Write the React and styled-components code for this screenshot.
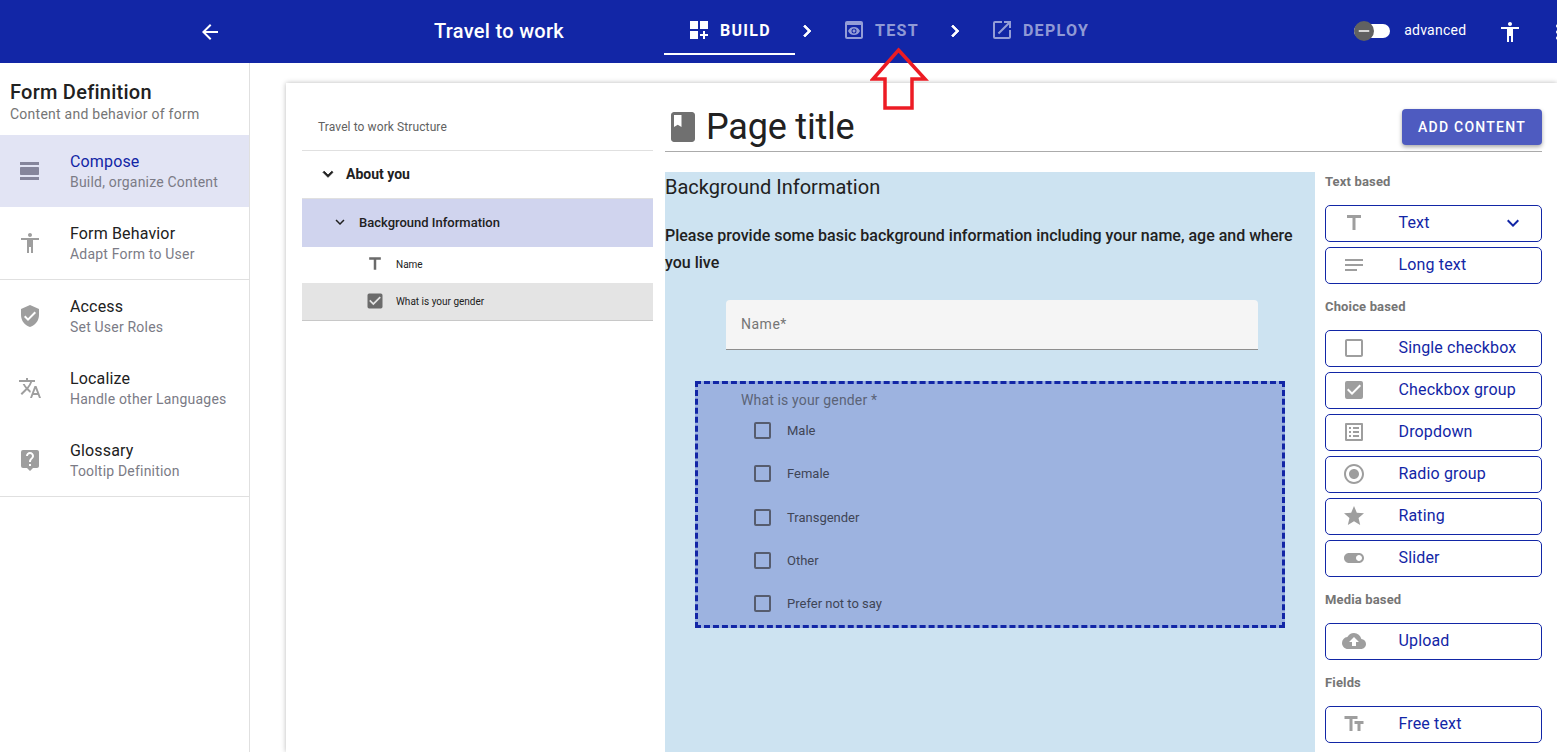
import React from 'react'
import styled, { createGlobalStyle } from 'styled-components'
import {
  MdAccessibility, MdArrowBack, MdBook, MdCheckBox, MdCheckBoxOutlineBlank, MdChevronRight,
  MdCloudUpload, MdDashboardCustomize, MdExpandMore, MdListAlt, MdLiveHelp, MdMoreVert, MdNotes,
  MdOpenInNew, MdPreview, MdRadioButtonChecked, MdRemove, MdStar, MdTextFields, MdTitle,
  MdToggleOn, MdTranslate, MdVerifiedUser, MdViewDay,
} from 'react-icons/md'

const BLUE = '#1226a6'

const Global = createGlobalStyle`
  html, body { margin: 0; padding: 0; height: 100%; overflow: hidden; }
  body { font-family: Roboto, "Liberation Sans", sans-serif; color: #212121; background: #fff; }
  * { box-sizing: border-box; }
`

const Page = styled.div`
  position: relative;
  height: 100vh;
  display: flex;
  flex-direction: column;
  overflow: hidden;
`

// Header
const TopBar = styled.header`
  flex: none;
  height: 63px;
  background: ${BLUE};
  color: #fff;
  display: flex;
  align-items: center;
  white-space: nowrap;
  & > * { flex: none; }
`
const BackSlot = styled.div`
  width: 434px;
  padding-left: 198px;
  display: flex;
  font-size: 24px;
`
const AppTitle = styled.div`
  width: 230px;
  margin-bottom: 2px;
  font-size: 20px;
  font-weight: 500;
  letter-spacing: .3px;
`
const Tab = styled.div`
  height: 63px;
  padding: 0 24px 3px 23px;
  display: flex;
  align-items: center;
  gap: 9px;
  font-size: 16px;
  font-weight: 700;
  letter-spacing: 1.3px;
  color: ${p => (p.$active ? '#fff' : 'rgba(255,255,255,.55)')};
  position: relative;
  ${p => p.$active && `
    &::after {
      content: "";
      position: absolute;
      left: 0;
      right: 0;
      bottom: 8px;
      height: 2px;
      background: #fff;
    }
  `}
`
const Chevron = styled(MdChevronRight)`
  font-size: 24px;
  margin-bottom: 1px;
  path:last-child { stroke: currentColor; stroke-width: .8; }
`
const Toggle = styled.div`
  position: relative;
  margin-left: 241px;
  width: 36px;
  height: 14px;
  border-radius: 7px;
  background: #fff;
  margin-bottom: 1px;
`
const Thumb = styled.span`
  position: absolute;
  left: 0;
  top: -3px;
  width: 20px;
  height: 20px;
  border-radius: 50%;
  background: #616161;
  color: #fff;
  display: flex;
  align-items: center;
  justify-content: center;
  font-size: 18px;
`
const AdvancedLabel = styled.span`
  margin: 0 0 3px 14px;
  font-size: 14px;
  letter-spacing: .25px;
`
const BarIcon = styled.span`
  display: flex;
  font-size: 24px;
  margin-left: ${p => p.$gap}px;
`

// Body
const Body = styled.div`
  flex: 1;
  min-height: 0;
  display: flex;
`
const Sidebar = styled.aside`
  flex: none;
  width: 250px;
  border-right: 1px solid #e0e0e0;
`
const SideHead = styled.div`
  padding: 16px 10px 12px;
`
const SideTitle = styled.div`
  font-size: 20px;
  font-weight: 500;
  line-height: 26px;
  letter-spacing: .25px;
`
const SideSub = styled.div`
  font-size: 14px;
  line-height: 18px;
  letter-spacing: .25px;
  color: #757575;
`
const SideItem = styled.div`
  height: 72px;
  padding: 16px 0 0 18px;
  display: flex;
  gap: 28px;
  background: ${p => (p.$active ? '#e2e4f4' : 'transparent')};
`
const SideIcon = styled.span`
  display: flex;
  font-size: 24px;
  height: 40px;
  align-items: center;
  color: ${p => (p.$active ? '#85859b' : '#9e9e9e')};
`
const SideName = styled.div`
  font-size: 16px;
  line-height: 21px;
  letter-spacing: .15px;
  color: ${p => (p.$active ? BLUE : '#212121')};
`
const SideHint = styled.div`
  font-size: 14px;
  line-height: 20px;
  letter-spacing: .2px;
  color: #7b7b86;
`
const SideRule = styled.div`
  height: 1px;
  background: #e0e0e0;
`
const Main = styled.main`
  flex: 1;
  min-width: 0;
  padding: 20px 0 0 36px;
  display: flex;
`
const Card = styled.div`
  flex: 1;
  min-width: 0;
  display: flex;
  gap: 12px;
  padding: 20px 15px 0 16px;
  background: #fff;
  box-shadow: 0 0 5px rgba(0,0,0,.28);
`

// Structure tree
const Tree = styled.div`
  flex: none;
  width: 351px;
`
const TreeHead = styled.div`
  height: 48px;
  padding: 1px 0 0 16px;
  display: flex;
  align-items: center;
  font-size: 12px;
  letter-spacing: .1px;
  color: #616161;
  border-bottom: 1px solid #e0e0e0;
`
const SectionRow = styled.div`
  height: 48px;
  padding: 0 0 2px 16px;
  display: flex;
  align-items: center;
  gap: 8px;
  font-size: 14px;
  font-weight: 700;
  border-bottom: 1px solid #e0e0e0;
  svg { font-size: 20px; }
  svg path:last-child { stroke: currentColor; stroke-width: 1; }
`
const GroupRow = styled.div`
  height: 48px;
  padding: 0 0 2px 29px;
  display: flex;
  align-items: center;
  gap: 10px;
  font-size: 13px;
  font-weight: 500;
  background: #d0d4ee;
  svg { font-size: 18px; }
`
const LeafRow = styled.div`
  height: ${p => (p.$selected ? 38 : 36)}px;
  padding: 0 0 ${p => (p.$selected ? 1 : 2)}px 63px;
  display: flex;
  align-items: center;
  gap: 11px;
  font-size: 10px;
  background: ${p => (p.$selected ? '#e4e4e4' : 'transparent')};
  border-bottom: ${p => (p.$selected ? '1px solid #c8c8c8' : 'none')};
  svg { font-size: 20px; color: #6b6b6b; }
`

// Right hand content
const Content = styled.div`
  flex: 1;
  min-width: 0;
  display: flex;
  flex-direction: column;
`
const TitleRow = styled.div`
  flex: none;
  height: 49px;
  display: flex;
  align-items: center;
  justify-content: space-between;
  padding-bottom: 1px;
  border-bottom: 1px solid #ababab;
`
const PageTitle = styled.h1`
  margin: 0;
  display: flex;
  align-items: center;
  gap: 5px;
  font-size: 36px;
  font-weight: 400;
  letter-spacing: -.2px;
  svg { font-size: 36px; color: #707070; }
`
const AddButton = styled.button`
  width: 140px;
  height: 36px;
  border: 0;
  border-radius: 4px;
  background: #4e5bc0;
  color: #fff;
  font: 500 14px Roboto, sans-serif;
  letter-spacing: 1.25px;
  text-transform: uppercase;
  box-shadow: 0 2px 4px rgba(0,0,0,.35);
`
const Columns = styled.div`
  flex: 1;
  min-height: 0;
  margin-top: 20px;
  display: flex;
  gap: 10px;
`
const FormSection = styled.section`
  flex: 1;
  min-width: 0;
  background: #cde3f1;
`
const SectionTitle = styled.div`
  font-size: 20px;
  line-height: 30px;
`
const Intro = styled.p`
  margin: 20px 0 24px;
  font-size: 16px;
  font-weight: 500;
  line-height: 27px;
`
const NameField = styled.div`
  margin-left: 61px;
  width: 532px;
  height: 50px;
  padding: 0 15px 2px;
  display: flex;
  align-items: center;
  background: #f5f5f5;
  border-bottom: 1px solid #8e8e8e;
  border-radius: 4px 4px 0 0;
  font-size: 14px;
  letter-spacing: .5px;
  color: #757575;
`
const Selected = styled.div`
  margin: 31px 0 0 30px;
  width: 590px;
  height: 247px;
  padding: 6px 0 0 43px;
  background: #9db3e0;
  border: 3px dashed ${BLUE};
`
const Legend = styled.div`
  font-size: 14px;
  line-height: 20px;
  letter-spacing: .15px;
  color: #5b6377;
`
const OptionList = styled.div`
  margin: -1px 0 0 13px;
`
const Option = styled.label`
  height: 43.3px;
  display: flex;
  align-items: center;
  gap: 16px;
  font-size: 13px;
  color: #3f4556;
`
const Box = styled.span`
  width: 17px;
  height: 17px;
  border: 2px solid #565c6e;
  border-radius: 2px;
`

// Palette
const Palette = styled.div`
  flex: none;
  width: 217px;
`
const PaletteHead = styled.div`
  height: 33px;
  margin-top: ${p => (p.$first ? 0 : 13)}px;
  padding-bottom: 14px;
  display: flex;
  align-items: center;
  font-size: 13px;
  font-weight: 700;
  letter-spacing: .15px;
  color: #757575;
`
const PaletteButton = styled.div`
  height: 37px;
  margin-bottom: 5px;
  padding: 0 16px 2px 15px;
  display: flex;
  align-items: center;
  border: 1px solid ${BLUE};
  border-radius: 5px;
  font-size: 16px;
  letter-spacing: .15px;
  color: ${BLUE};
  background: #fff;
`
const PaletteIcon = styled.span`
  flex: none;
  width: 26px;
  margin-right: 31.5px;
  display: flex;
  justify-content: center;
  font-size: 24px;
  color: #9e9e9e;
`
const PaletteLabel = styled.span`
  flex: 1;
`

const Annotation = styled.svg`
  position: absolute;
  left: 870px;
  top: 46px;
  width: 60px;
  height: 66px;
`

const sideItems = [
  { icon: MdViewDay, name: 'Compose', hint: 'Build, organize Content', active: true },
  { icon: MdAccessibility, name: 'Form Behavior', hint: 'Adapt Form to User', rule: true },
  { icon: MdVerifiedUser, name: 'Access', hint: 'Set User Roles' },
  { icon: MdTranslate, name: 'Localize', hint: 'Handle other Languages' },
  { icon: MdLiveHelp, name: 'Glossary', hint: 'Tooltip Definition', rule: true },
]

const paletteGroups = [
  { title: 'Text based', items: [[MdTitle, 'Text', true], [MdNotes, 'Long text']] },
  {
    title: 'Choice based',
    items: [
      [MdCheckBoxOutlineBlank, 'Single checkbox'],
      [MdCheckBox, 'Checkbox group'],
      [MdListAlt, 'Dropdown'],
      [MdRadioButtonChecked, 'Radio group'],
      [MdStar, 'Rating'],
      [MdToggleOn, 'Slider'],
    ],
  },
  { title: 'Media based', items: [[MdCloudUpload, 'Upload']] },
  { title: 'Fields', items: [[MdTextFields, 'Free text']] },
]

const genders = ['Male', 'Female', 'Transgender', 'Other', 'Prefer not to say']

export default function App() {
  return (
    <Page>
      <Global />
      <TopBar>
        <BackSlot><MdArrowBack /></BackSlot>
        <AppTitle>Travel to work</AppTitle>
        <Tab $active><MdDashboardCustomize size={24} />BUILD</Tab>
        <Chevron />
        <Tab><MdPreview size={24} />TEST</Tab>
        <Chevron />
        <Tab><MdOpenInNew size={24} />DEPLOY</Tab>
        <Toggle><Thumb><MdRemove /></Thumb></Toggle>
        <AdvancedLabel>advanced</AdvancedLabel>
        <BarIcon $gap={32}><MdAccessibility /></BarIcon>
        <BarIcon $gap={24}><MdMoreVert /></BarIcon>
      </TopBar>
      <Body>
        <Sidebar>
          <SideHead>
            <SideTitle>Form Definition</SideTitle>
            <SideSub>Content and behavior of form</SideSub>
          </SideHead>
          {sideItems.map(({ icon: Icon, name, hint, active, rule }) => (
            <React.Fragment key={name}>
              <SideItem $active={active}>
                <SideIcon $active={active}><Icon /></SideIcon>
                <div>
                  <SideName $active={active}>{name}</SideName>
                  <SideHint>{hint}</SideHint>
                </div>
              </SideItem>
              {rule && <SideRule />}
            </React.Fragment>
          ))}
        </Sidebar>
        <Main>
          <Card>
            <Tree>
              <TreeHead>Travel to work Structure</TreeHead>
              <SectionRow><MdExpandMore />About you</SectionRow>
              <GroupRow><MdExpandMore />Background Information</GroupRow>
              <LeafRow><MdTitle />Name</LeafRow>
              <LeafRow $selected><MdCheckBox />What is your gender</LeafRow>
            </Tree>
            <Content>
              <TitleRow>
                <PageTitle><MdBook />Page title</PageTitle>
                <AddButton>Add content</AddButton>
              </TitleRow>
              <Columns>
                <FormSection>
                  <SectionTitle>Background Information</SectionTitle>
                  <Intro>Please provide some basic background information including your name, age and where you live</Intro>
                  <NameField>Name*</NameField>
                  <Selected>
                    <Legend>What is your gender *</Legend>
                    <OptionList>
                      {genders.map(g => (
                        <Option key={g}><Box />{g}</Option>
                      ))}
                    </OptionList>
                  </Selected>
                </FormSection>
                <Palette>
                  {paletteGroups.map((group, i) => (
                    <div key={group.title}>
                      <PaletteHead $first={i === 0}>{group.title}</PaletteHead>
                      {group.items.map(([Icon, label, more]) => (
                        <PaletteButton key={label}>
                          <PaletteIcon><Icon /></PaletteIcon>
                          <PaletteLabel>{label}</PaletteLabel>
                          {more && <MdExpandMore size={24} />}
                        </PaletteButton>
                      ))}
                    </div>
                  ))}
                </Palette>
              </Columns>
            </Content>
          </Card>
        </Main>
      </Body>
      <Annotation viewBox="870 46 60 66">
        <polygon points="898.5,50 925,79 912,79 912,108 885,108 885,79 873,79" fill="none" stroke="#ed1c24" strokeWidth="3.5" />
      </Annotation>
    </Page>
  )
}
